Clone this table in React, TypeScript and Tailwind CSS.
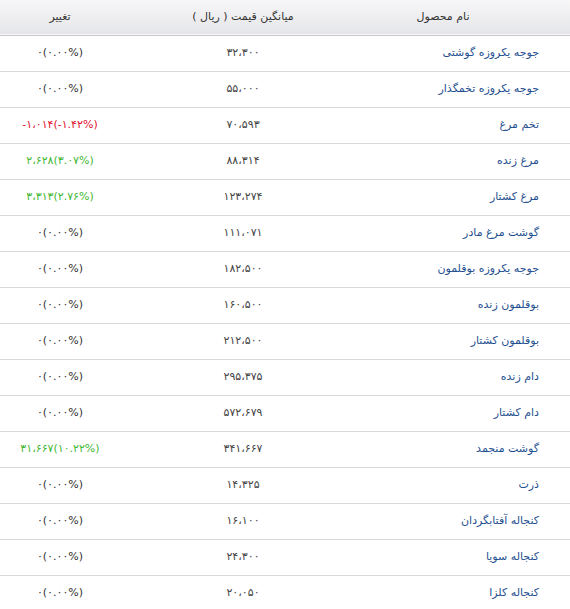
const rows: { name: string; price: string; change: string; tone: "zero" | "down" | "up" }[] = [
  { name: "جوجه یکروزه گوشتی", price: "۳۲،۳۰۰", change: "۰(۰.۰۰%)", tone: "zero" },
  { name: "جوجه یکروزه تخمگذار", price: "۵۵،۰۰۰", change: "۰(۰.۰۰%)", tone: "zero" },
  { name: "تخم مرغ", price: "۷۰،۵۹۳", change: "-۱،۰۱۴(-۱.۴۲%)", tone: "down" },
  { name: "مرغ زنده", price: "۸۸،۳۱۴", change: "۲،۶۲۸(۳.۰۷%)", tone: "up" },
  { name: "مرغ کشتار", price: "۱۲۳،۲۷۴", change: "۳،۳۱۳(۲.۷۶%)", tone: "up" },
  { name: "گوشت مرغ مادر", price: "۱۱۱،۰۷۱", change: "۰(۰.۰۰%)", tone: "zero" },
  { name: "جوجه یکروزه بوقلمون", price: "۱۸۲،۵۰۰", change: "۰(۰.۰۰%)", tone: "zero" },
  { name: "بوقلمون زنده", price: "۱۶۰،۵۰۰", change: "۰(۰.۰۰%)", tone: "zero" },
  { name: "بوقلمون کشتار", price: "۲۱۲،۵۰۰", change: "۰(۰.۰۰%)", tone: "zero" },
  { name: "دام زنده", price: "۲۹۵،۳۷۵", change: "۰(۰.۰۰%)", tone: "zero" },
  { name: "دام کشتار", price: "۵۷۲،۶۷۹", change: "۰(۰.۰۰%)", tone: "zero" },
  { name: "گوشت منجمد", price: "۳۴۱،۶۶۷", change: "۳۱،۶۶۷(۱۰.۲۲%)", tone: "up" },
  { name: "ذرت", price: "۱۴،۳۲۵", change: "۰(۰.۰۰%)", tone: "zero" },
  { name: "کنجاله آفتابگردان", price: "۱۶،۱۰۰", change: "۰(۰.۰۰%)", tone: "zero" },
  { name: "کنجاله سویا", price: "۲۴،۳۰۰", change: "۰(۰.۰۰%)", tone: "zero" },
  { name: "کنجاله کلزا", price: "۲۰،۰۵۰", change: "۰(۰.۰۰%)", tone: "zero" },
];

const toneClass = {
  zero: "text-[#333333]",
  down: "text-[#e3122f]",
  up: "text-[#3fb833]",
};

export default function App() {
  return (
    <div className="w-[570px] bg-white font-['DejaVu_Sans',sans-serif] text-[11px]" dir="rtl">
      <table className="w-full table-fixed border-collapse">
        <colgroup>
          <col className="w-[204px]" />
          <col className="w-[246px]" />
          <col className="w-[120px]" />
        </colgroup>
        <thead>
          <tr className="h-[35px] border-b border-[#c9c9c9] bg-gradient-to-b from-[#f7f7f8] to-[#e5e6e9] text-[#333333]">
            <th className="pr-[50px] text-center font-normal">نام محصول</th>
            <th className="text-center font-normal">میانگین قیمت ( ریال )</th>
            <th className="text-center font-normal">تغییر</th>
          </tr>
        </thead>
        <tbody>
          {rows.map((r) => (
            <tr key={r.name} className="h-[36px] border-b border-[#d9d9d9]">
              <td className="pr-[31px] text-right text-[#1f4f8f]">{r.name}</td>
              <td className="text-center text-[#444444]">{r.price}</td>
              <td className={"text-center " + toneClass[r.tone]}>
                <span dir="ltr">{r.change}</span>
              </td>
            </tr>
          ))}
        </tbody>
      </table>
    </div>
  );
}
